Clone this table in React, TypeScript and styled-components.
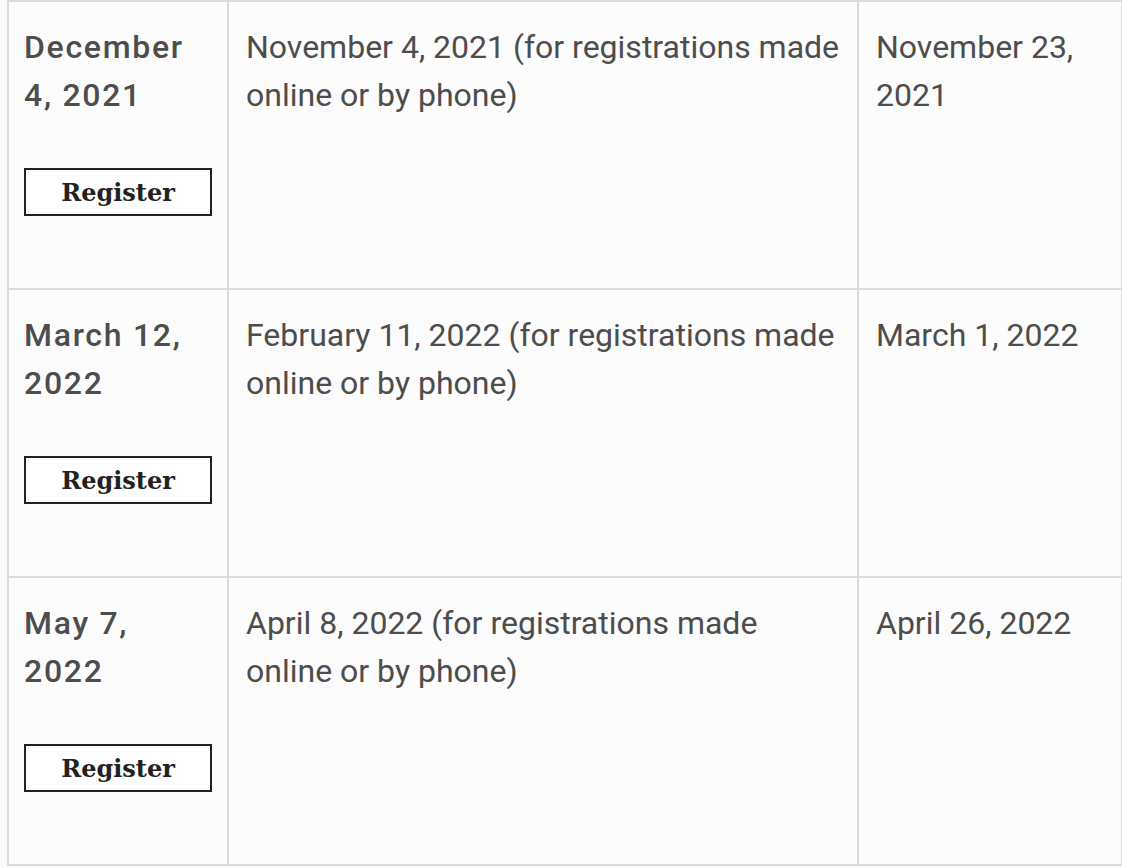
import React from "react";
import styled, { createGlobalStyle } from "styled-components";

const Global = createGlobalStyle`
  html, body { margin: 0; padding: 0; background: #fafafa; }
  body { font-family: Roboto, "Noto Sans", sans-serif; }
`;

const Page = styled.div`
  padding: 0 1px 0 7px;
`;

const Table = styled.table`
  width: 1114px;
  border-collapse: collapse;
  table-layout: fixed;
  background: #fcfcfc;
`;

const Cell = styled.td<{ $w: number; $head?: boolean }>`
  width: ${(p) => p.$w}px;
  height: 288px;
  box-sizing: border-box;
  border: 2px solid #dadada;
  vertical-align: top;
  padding: 21px ${(p) => (p.$head ? 20 : 12)}px 0 ${(p) => (p.$head ? 15 : 17)}px;
  font-size: 32px;
  line-height: 48px;
  color: #4d4d4d;
  font-weight: ${(p) => (p.$head ? 500 : 400)};
  letter-spacing: ${(p) => (p.$head ? "1.7px" : "0")};
`;

const Button = styled.button`
  display: block;
  margin-top: 49px;
  width: 188px;
  height: 48px;
  box-sizing: border-box;
  border: 2px solid #222;
  background: #fff;
  font-family: "DejaVu Serif", "Liberation Serif", serif;
  font-weight: bold;
  font-size: 24px;
  color: #222;
  letter-spacing: 0;
  padding: 0;
  cursor: pointer;
`;

const rows = [
  ["December 4, 2021", "November 4, 2021 (for registrations made online or by phone)", "November 23, 2021"],
  ["March 12, 2022", "February 11, 2022 (for registrations made online or by phone)", "March 1, 2022"],
  ["May 7, 2022", "April 8, 2022 (for registrations made online or by phone)", "April 26, 2022"],
];

export default function App() {
  return (
    <Page>
      <Global />
      <Table>
        <tbody>
          {rows.map((r) => (
            <tr key={r[0]}>
              <Cell $w={220} $head>
                {r[0]}
                <Button>Register</Button>
              </Cell>
              <Cell $w={630}>{r[1]}</Cell>
              <Cell $w={264}>{r[2]}</Cell>
            </tr>
          ))}
        </tbody>
      </Table>
    </Page>
  );
}
